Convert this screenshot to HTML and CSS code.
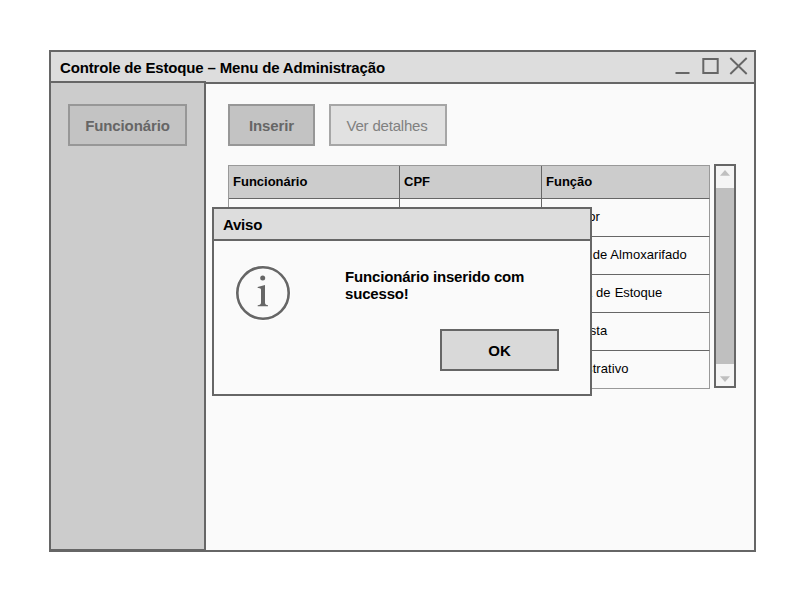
FILE: index.html
```html
<!DOCTYPE html>
<html lang="pt-BR">
<head>
<meta charset="utf-8">
<title>Controle de Estoque</title>
<link rel="stylesheet" href="styles.css">
</head>
<body>
<div class="window">
  <header class="titlebar">
    <h1 class="title">Controle de Estoque – Menu de Administração</h1>
    <svg class="controls" width="76" height="22" viewBox="0 0 76 22" fill="none" stroke="#666">
      <path stroke-width="2" d="M3.500 18H17.500M31.300 4H45.700V18H31.300Z"/>
      <path stroke-width="1.900" d="M58.300 3L74.700 19M74.700 3L58.300 19"/>
    </svg>
  </header>
  <div class="body">
    <nav class="sidebar">
      <button class="btn muted side-btn">Funcionário</button>
    </nav>
    <main class="content">
      <div class="toolbar">
        <button class="btn muted insert">Inserir</button>
        <button class="btn disabled details">Ver detalhes</button>
      </div>
      <div class="list">
        <table class="table">
          <colgroup><col class="c1"><col class="c2"><col class="c3"></colgroup>
          <thead><tr><th>Funcionário</th><th>CPF</th><th>Função</th></tr></thead>
          <tbody>
            <tr><td></td><td></td><td>Assessor</td></tr>
            <tr><td></td><td></td><td>Auxiliar de Almoxarifado</td></tr>
            <tr><td></td><td></td><td class="snug">Analista de Estoque</td></tr>
            <tr><td></td><td></td><td>Estoquista</td></tr>
            <tr><td></td><td></td><td>Administrativo</td></tr>
          </tbody>
        </table>
        <div class="scrollbar">
          <svg class="arrow" width="18" height="22" viewBox="0 0 18 22"><path d="M4 9.700L9 4L14 9.700Z" fill="#bfbfbf"/></svg>
          <div class="thumb"></div>
          <svg class="arrow" width="18" height="22" viewBox="0 0 18 22"><path d="M4 12.300L9 18L14 12.300Z" fill="#bfbfbf"/></svg>
        </div>
      </div>
    </main>
  </div>
</div>
<section class="dialog" role="dialog">
  <h2 class="dialog-title">Aviso</h2>
  <div class="dialog-body">
    <svg class="info" width="56" height="56" viewBox="0 0 56 56">
      <circle cx="28" cy="28" r="27.800" fill="#fff"/>
      <circle cx="28" cy="28" r="25.700" fill="#fafafa" stroke="#666" stroke-width="2.600"/>
      <circle cx="27.700" cy="13" r="2.500" fill="#666"/>
      <path d="M22.700 22L30 20V37.500Q30 40.300 33 40.300V41.200H22.700V40.300Q26 40.300 26 37.500V24.500Q26 22.600 22.700 23Z" fill="#666"/>
    </svg>
    <div class="dialog-main">
      <p class="message">Funcionário inserido com sucesso!</p>
      <button class="btn ok">OK</button>
    </div>
  </div>
</section>
</body>
</html>
```
FILE: styles.css
```css
* { box-sizing: border-box; }
body {
  margin: 0;
  padding: 50px 49px;
  height: 600px;
  overflow: hidden;
  background: #fff;
  color: #000;
  font-family: "Liberation Sans", Arial, sans-serif;
}
h1, h2, p { margin: 0; }
.window {
  width: 707px;
  height: 502px;
  border: 2px solid #666;
  background: #fafafa;
  display: flex;
  flex-direction: column;
}
.titlebar {
  height: 32px;
  flex: none;
  border-bottom: 2px solid #666;
  background: #ddd;
  display: flex;
  justify-content: space-between;
  padding: 3px 6px 0 9px;
}
.title { font-size: 15px; line-height: 26px; letter-spacing: -0.165px; }
.body { flex: 1; display: flex; }
.sidebar {
  width: 157px;
  height: 470px;
  margin: -3px 0 0 -2px;
  border: 2px solid #666;
  background: #ccc;
  padding: 21px 17px;
}
.btn {
  display: block;
  height: 42px;
  padding: 1px 0 0;
  border: 2px solid #666;
  background: #d9d9d9;
  color: #000;
  font: bold 15px "Liberation Sans", Arial, sans-serif;
  letter-spacing: -0.1px;
}
.muted { background: #c3c3c3; border-color: #979797; color: #666; }
.disabled {
  background: #e1e1e1;
  border-color: #a6a6a6;
  color: #808080;
  font-weight: normal;
  letter-spacing: -0.2px;
}
.side-btn { width: 119px; }
.insert { width: 87px; }
.details { width: 118px; padding-right: 2px; }
.content { padding: 20px 0 0 22px; }
.toolbar { display: flex; gap: 14px; }
.list { display: flex; gap: 4px; margin-top: 18px; }
.table {
  width: 482px;
  height: 224px;
  margin-top: 1px;
  table-layout: fixed;
  border-collapse: separate;
  border-spacing: 0;
  border-left: 1px solid #999;
  border-top: 1px solid #999;
  font-size: 13px;
}
.c1 { width: 171px; }
.c2 { width: 142px; }
.c3 { width: 168px; }
th, td {
  height: 38px;
  padding: 0 0 2px 4px;
  border-right: 1px solid #666;
  border-bottom: 1px solid #666;
  text-align: left;
  white-space: nowrap;
}
td { letter-spacing: 0.06px; }
.snug { letter-spacing: -0.04px; word-spacing: 0.6px; }
th { height: 33px; padding-bottom: 1px; background: #ccc; }
th:last-child, td:last-child { border-right-color: #999; }
tr:last-child td { border-bottom-color: #999; }
.scrollbar {
  width: 22px;
  height: 224px;
  border: 2px solid #666;
  background: #f5f5f5;
  display: flex;
  flex-direction: column;
}
.arrow { display: block; flex: none; }
.thumb { flex: 1; background: #bfbfbf; }
.dialog {
  position: absolute;
  left: 212px;
  top: 207px;
  width: 380px;
  height: 189px;
  border: 2px solid #666;
  background: #fafafa;
}
.dialog-title {
  height: 32px;
  padding-left: 9px;
  border-bottom: 2px solid #666;
  background: #ddd;
  font-size: 15px;
  line-height: 31px;
  letter-spacing: -0.25px;
}
.dialog-body { display: flex; padding: 24px 31px 0 21px; }
.dialog-main { flex: 1; margin-left: 54px; padding-top: 3px; }
.message {
  width: 190px;
  font-size: 15px;
  font-weight: bold;
  line-height: 17px;
  letter-spacing: -0.17px;
}
.ok { width: 119px; margin: 27px 0 0 auto; }
```
